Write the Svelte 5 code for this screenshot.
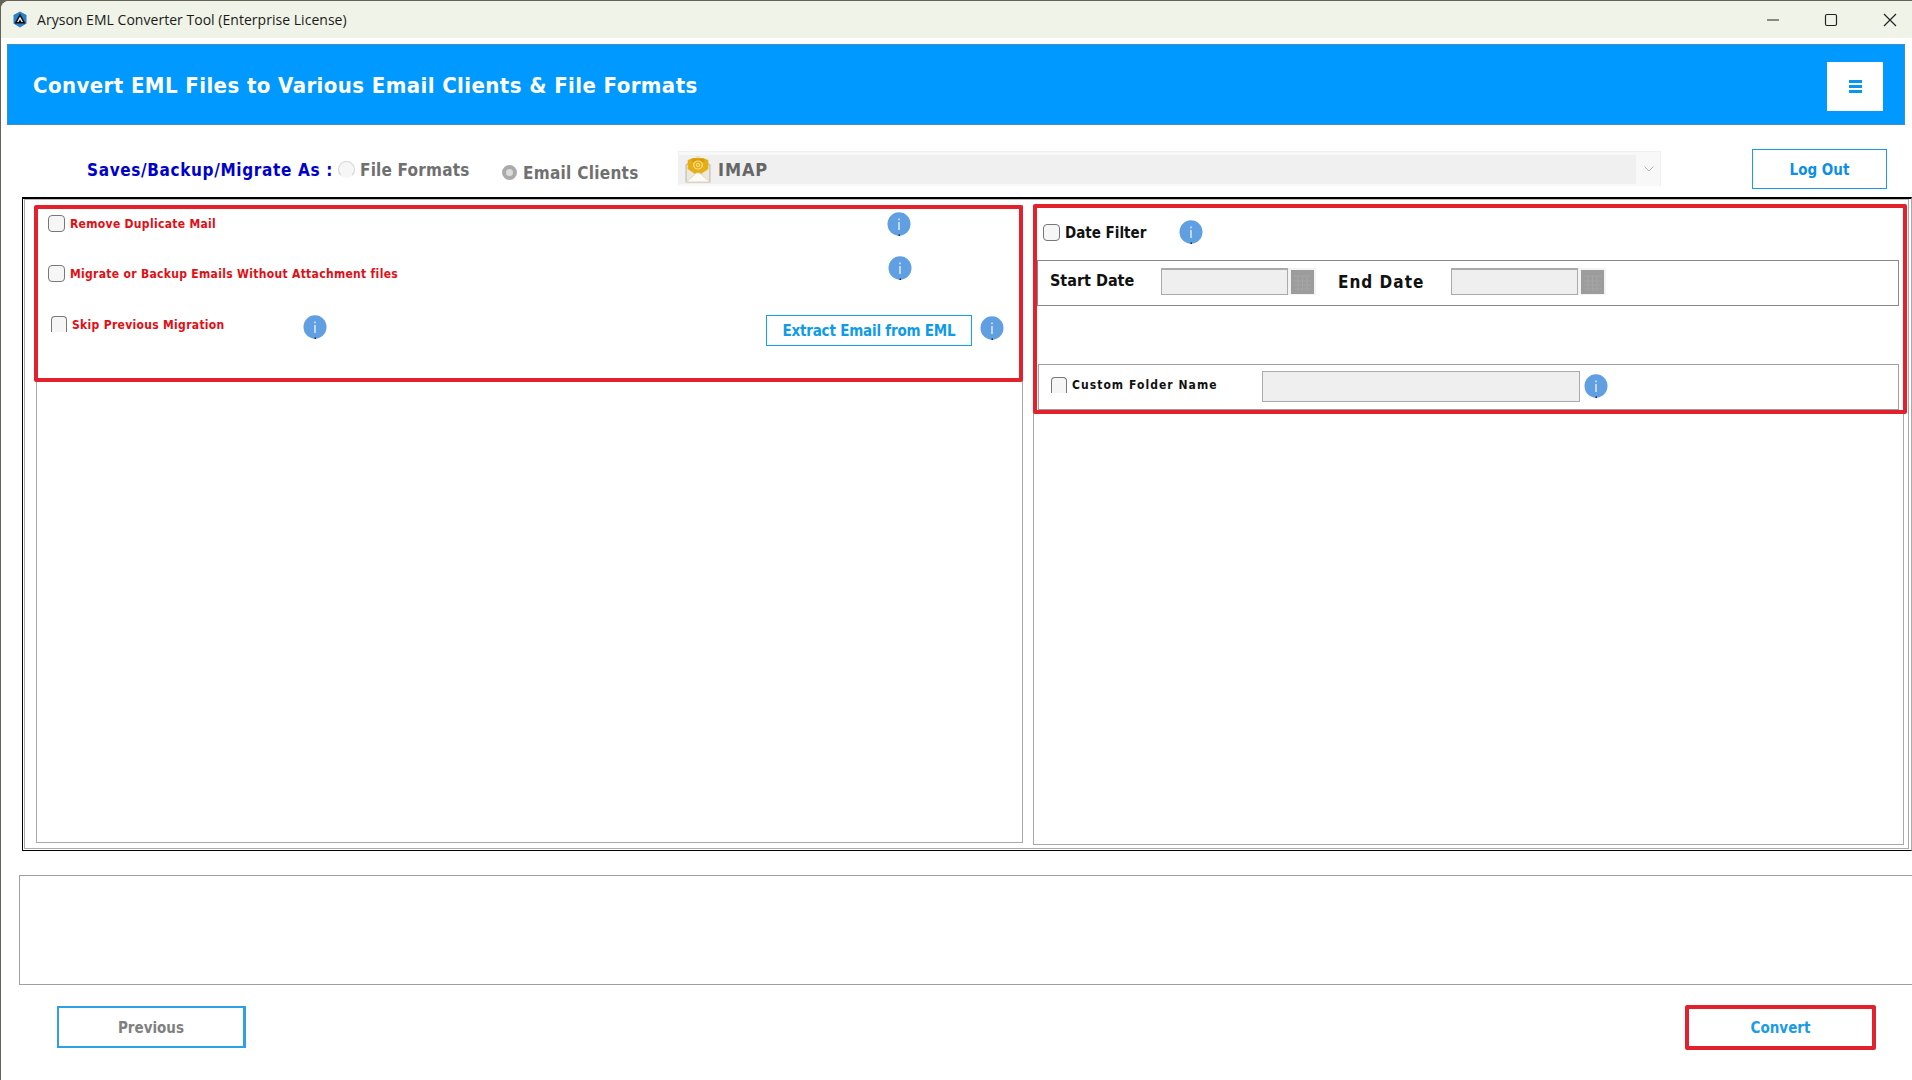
{#snippet info()}
  <svg class="info" viewBox="0 0 24 24" aria-hidden="true">
    <ellipse cx="12" cy="12" rx="11.5" ry="11.8" fill="#5f9fe2"/>
    <rect x="11.3" y="10" width="1.4" height="8" fill="#e8f1fb"/>
    <rect x="11.3" y="6.5" width="1.4" height="1.8" fill="#e8f1fb"/>
    <rect x="11.5" y="22.5" width="1.5" height="1.5" fill="#222"/>
  </svg>
{/snippet}

{#snippet calendar()}
  <span class="cal">
    <svg viewBox="0 0 23 24" width="23" height="24" aria-hidden="true">
      <rect width="23" height="24" fill="#9c9c9c"/>
      <path d="M3 6H20M3 11H20M3 15H20M3 19H20M7 6V21M11.500 6V21M16 6V21" stroke="#a5a5a5" stroke-width="1" fill="none"/>
    </svg>
  </span>
{/snippet}

<div class="window">
  <div class="titlebar">
    <svg class="logo" viewBox="0 0 16 17" aria-hidden="true">
      <path d="M8 0.500L14.500 4V12.500L8 16.500L1.500 12.500V4Z" fill="#2c7fc4"/>
      <path d="M8 2.500L13.500 12.500H2.500Z" fill="#0c0c10"/>
      <path d="M8 5.500L11 11H9.500L8 8.500L6.500 11H5Z" fill="#f2f2f2"/>
    </svg>
    <span class="apptitle">Aryson EML Converter Tool (Enterprise License)</span>
    <div class="controls">
      <svg viewBox="0 0 14 14" width="14" height="14" aria-hidden="true"><path d="M1 7H13" stroke="#222" stroke-width="1.200"/></svg>
      <svg viewBox="0 0 14 14" width="14" height="14" aria-hidden="true"><rect x="1.500" y="1.500" width="11" height="11" rx="1.500" fill="none" stroke="#222" stroke-width="1.200"/></svg>
      <svg viewBox="0 0 14 14" width="14" height="14" aria-hidden="true"><path d="M1 1L13 13M13 1L1 13" stroke="#222" stroke-width="1.200"/></svg>
    </div>
  </div>

  <header class="banner">
    <h1>Convert EML Files to Various Email Clients &amp; File Formats</h1>
    <button class="menu" aria-label="Menu">
      <svg viewBox="0 0 13 13" width="13" height="13" aria-hidden="true"><path d="M0 0H13V3H0ZM0 5H13V8H0ZM0 10H13V13H0Z" fill="#0b96ee"/></svg>
    </button>
  </header>

  <div class="toolbar">
    <span class="saves">Saves/Backup/Migrate As :</span>
    <input class="radio off" type="radio" name="k" />
    <span class="opt ff">File Formats</span>
    <input class="radio on" type="radio" name="k" />
    <span class="opt ec">Email Clients</span>
    <div class="select">
      <div class="selectinner">
        <svg class="mail" viewBox="0 0 24 28" width="26" height="28" preserveAspectRatio="none" aria-hidden="true">
          <path d="M1 10L3.500 8H20.500L23 10V27H1Z" fill="#ece9dc" stroke="#bdb8a6" stroke-width="1"/>
          <path d="M10 1H14V4H10Z" fill="#efe3b8"/>
          <path d="M2.500 5L8 3H16L21.500 5V14L12 21L2.500 14Z" fill="#e6ae14"/>
          <path d="M6 3.500H18V7H6Z" fill="#d99c0a"/>
          <circle cx="12" cy="10" r="4" fill="none" stroke="#f8e08c" stroke-width="1.200"/>
          <circle cx="12" cy="10" r="1.500" fill="none" stroke="#f8e08c" stroke-width="1"/>
          <path d="M1 27L10.500 18H13.500L23 27Z" fill="#fbfaf4" stroke="#d8d3c0" stroke-width="0.800"/>
        </svg>
        <span class="imap">IMAP</span>
      </div>
      <svg class="chev" viewBox="0 0 10 6" width="10" height="6" aria-hidden="true"><path d="M0.500 0.500L5 5L9.500 0.500" fill="none" stroke="#b5b5b5" stroke-width="1"/></svg>
    </div>
    <button class="logout">Log Out</button>
  </div>

  <div class="main">
    <div class="frame">
      <section class="panel left">
        <div class="redbox lefthl">
          <div class="row r1">
            <input class="cb" type="checkbox" />
            <span class="redlabel">Remove Duplicate Mail</span>
            <span class="push">{@render info()}</span>
          </div>
          <div class="row r2">
            <input class="cb" type="checkbox" />
            <span class="redlabel">Migrate or Backup Emails Without Attachment files</span>
            <span class="push up">{@render info()}</span>
          </div>
          <div class="row r3">
            <input class="cb clip" type="checkbox" />
            <span class="redlabel skip">Skip Previous Migration</span>
            <span class="skipinfo">{@render info()}</span>
            <button class="extract">Extract Email from EML</button>
            <span class="extinfo">{@render info()}</span>
          </div>
        </div>
      </section>

      <section class="panel right">
        <div class="redbox righthl">
          <div class="datefilter">
            <input class="cb" type="checkbox" />
            <span class="dflabel">Date Filter</span>
            <span class="dfinfo">{@render info()}</span>
          </div>
          <div class="dates">
            <span class="sd">Start Date</span>
            <div class="field"></div>
            {@render calendar()}
            <span class="ed">End Date</span>
            <div class="field"></div>
            {@render calendar()}
          </div>
          <div class="custom">
            <input class="cb clip" type="checkbox" />
            <span class="cflabel">Custom Folder Name</span>
            <div class="field wide"></div>
            <span class="cinfo">{@render info()}</span>
          </div>
        </div>
      </section>
    </div>
  </div>

  <div class="logbox"></div>

  <footer class="footer">
    <button class="prev">Previous</button>
    <button class="convert">Convert</button>
  </footer>
</div>

<style>
  :global(body) { margin: 0; background: #63635b; overflow: hidden; }
  * { box-sizing: border-box; }
  button { background: #fff; font-family: inherit; cursor: pointer; padding: 0; }
  .window {
    width: 1911px; height: 1079px; margin: 1px 0 0 1px; background: #fff;
    border-top-left-radius: 8px; overflow: hidden;
    font-family: "DejaVu Sans Condensed", "DejaVu Sans", sans-serif;
    font-stretch: condensed;
  }
  .titlebar {
    height: 37px; background: #f0f3e8; display: flex; align-items: center; padding-left: 11px;
  }
  .logo { width: 16px; height: 17px; flex: none; }
  .apptitle {
    margin-left: 9px; font: 14px "Open Sans", sans-serif; color: #1a1a1a; letter-spacing: 0.03px;
  }
  .controls { margin-left: auto; display: flex; gap: 45px; padding-right: 15px; }
  .controls svg:first-child { margin-right: -1px; }
  .banner {
    height: 81px; margin: 6px 7px 0 6px; background: #0099ff; border: 1px solid #3f8fc4;
    display: flex; align-items: center; justify-content: space-between; padding: 0 21px 0 25px;
  }
  h1 { margin: 2px 0 0; color: #fff; font-size: 22px; font-weight: 700; letter-spacing: 0.41px; }
  .menu { width: 56px; height: 49px; margin-top: 4px; border: 0; display: flex; align-items: center; justify-content: center; }
  .toolbar { height: 72px; display: flex; align-items: center; padding: 15px 25px 0 0; font-weight: 700; }
  .saves { margin: 2px 0 0 86px; width: 245px; flex: none; color: #0000cc; font-size: 17px; letter-spacing: 0.65px; white-space: nowrap; }
  .radio { appearance: none; flex: none; border-radius: 50%; margin: 0; }
  .radio.off { width: 17px; height: 17px; margin: 2px 0 0 6px; background: #f6f6f6; border: 1px solid #d4d4d4; border-bottom-color: transparent; }
  .radio.on { width: 15px; height: 15px; margin: 7px 0 0 33px; background: #dcdcdc; border: 4px solid #aaa; }
  .opt { color: #707070; font-size: 17px; white-space: nowrap; flex: none; }
  .ff { width: 109px; margin: 3px 0 0 5px; letter-spacing: 0.2px; }
  .ec { width: 115px; margin: 9px 0 0 6px; letter-spacing: 0.28px; }
  .select {
    width: 983px; height: 35px; margin-left: 40px; background: #f8f8f8; display: flex; align-items: center;
    border: 1px solid #f0f0f0; border-bottom: 0; flex: none;
  }
  .selectinner { width: 957px; height: 29px; background: #f0f0f0; display: flex; align-items: center; padding-left: 6px; flex: none; }
  .mail { flex: none; }
  .imap { margin-left: 7px; color: #666; font-size: 18px; letter-spacing: 0.9px; }
  .chev { margin-left: 8px; }
  .logout {
    width: 135px; height: 40px; padding-top: 2px; margin-left: auto; border: 1px solid #1c9ae6; color: #0d8fe6;
    font-weight: 700; font-size: 15px;
  }
  .main {
    height: 654px; border-top: 2px solid #000; border-left: 1px solid #000; border-bottom: 1px solid #000;
    border-right: 1px solid #aaa; margin-left: 21px; display: flex;
  }
  .frame {
    flex: 1; margin: 0 3px 1px 1px; border: 1px solid #aaa; border-top-color: #bbb; padding: 5px 4px 3px 11px;
    display: grid; grid-template-columns: 987px 871px; column-gap: 10px;
  }
  .panel { border: 1px solid #a8a8a8; border-top: 0; min-width: 0; }
  .left { margin-bottom: 2px; }
  .redbox { border: 4px solid #e3212d; border-radius: 2px; }
  .lefthl { height: 177px; margin-left: -3px; margin-right: -1px; }
  .row { display: flex; align-items: center; }
  .r1 { height: 28px; padding: 2px 108px 0 10px; }
  .r1 .cb { margin-bottom: 2px; }
  .r2 { height: 24px; margin-top: 24px; padding: 0 107px 0 10px; }
  .r3 { height: 30px; margin-top: 27px; padding: 0 15px 0 13px; }
  .cb { appearance: none; width: 17px; height: 17px; margin: 0; flex: none; background: #f6f6f6; border: 1px solid #777; border-radius: 4px; }
  .cb.clip { width: 16px; height: 16px; border-bottom: 0; border-radius: 4px 4px 0 0; }
  .r3 .cb { margin-bottom: 6px; }
  .redlabel { margin: 1px 0 0 5px; color: #e30d14; font-weight: 700; font-size: 12px; letter-spacing: 0.31px; white-space: nowrap; flex: none; }
  .r1 .redlabel { margin-top: 0; margin-bottom: 1px; }
  .skip { margin: 0 0 4px 5px; width: 150px; }
  .info { width: 24px; height: 24px; display: block; flex: none; }
  .push { margin-left: auto; }
  .push.up { margin-bottom: 10px; }
  .skipinfo { margin-left: 81px; }
  .extinfo { margin-top: 2px; }
  .extract {
    width: 206px; height: 31px; margin: 7px 8px 0 auto; border: 1px solid #14a0ea; color: #0f9be8;
    font-weight: 700; font-size: 15px; letter-spacing: -0.2px;
  }
  .right { align-self: stretch; }
  .righthl { height: 210px; margin: -1px -4px 0 -1px; }
  .datefilter { height: 52px; display: flex; align-items: center; padding: 0 0 4px 6px; }
  .dflabel { width: 81px; margin: 2px 0 0 5px; font-weight: 700; font-size: 15px; color: #111; flex: none; white-space: nowrap; }
  .dfinfo { margin-left: 33px; }
  .dates {
    height: 46px; margin-right: 4px; border: 1px solid #888; display: flex; align-items: center; font-weight: 700; color: #111;
  }
  .sd { width: 85px; margin: 0 0 6px 12px; font-size: 16px; flex: none; white-space: nowrap; }
  .ed { width: 86px; margin: 0 0 3px 22px; font-size: 17px; flex: none; letter-spacing: 1px; white-space: nowrap; }
  .sd + .field { margin-left: 26px; }
  .ed + .field { margin-left: 27px; }
  .field { width: 127px; height: 27px; margin-bottom: 3px; background: #efefef; border: 1px solid #aaa; border-top-width: 2px; flex: none; }
  .cal { width: 28px; height: 27px; margin-bottom: 3px; background: #f3f3f3; display: flex; align-items: center; justify-content: center; flex: none; }
  .custom {
    height: 46px; margin: 58px 4px 0 1px; border: 1px solid #a0a0a0; border-bottom-color: #999; display: flex; align-items: center; padding-left: 12px;
  }
  .custom .cb { margin-bottom: 4px; }
  .cflabel { width: 145px; margin: 0 0 5px 5px; font-weight: 700; font-size: 12px; letter-spacing: 1.05px; color: #111; flex: none; white-space: nowrap; }
  .field.wide { width: 318px; height: 31px; margin: 0 0 1px 45px; border-top-width: 1px; }
  .cinfo { margin: 0 0 2px 4px; }
  .logbox { height: 110px; margin: 24px 0 0 18px; border: 1px solid #a0a0a0; border-right: 0; }
  .footer { height: 45px; margin-top: 20px; display: flex; justify-content: space-between; padding: 0 36px 0 56px; }
  .prev { width: 189px; height: 42px; margin-top: 1px; padding-top: 2px; border: 2px solid #2fa0e8; border-right-width: 3px; color: #808080; font-weight: 700; font-size: 15px; }
  .convert { width: 191px; height: 45px; padding-top: 1px; border: 4px solid #e3212d; border-radius: 2px; color: #1a9be8; font-weight: 700; font-size: 15px; }
</style>
